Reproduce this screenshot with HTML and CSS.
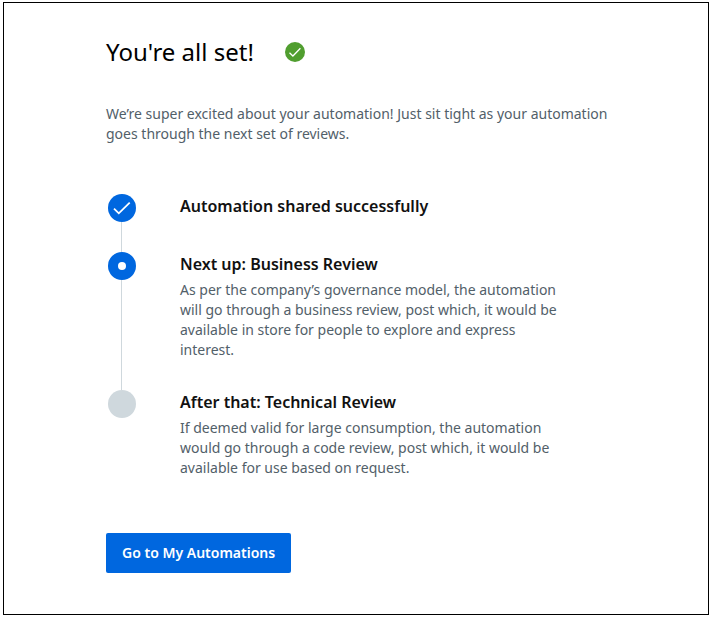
FILE: index.html
```
<!DOCTYPE html>
<html lang="en">
<head>
    <meta charset="utf-8">
    <title>You're all set!</title>
    <link rel="stylesheet" href="styles.css">
</head>
<body>
    <main class="panel">
        <div class="heading">
            <h1>You're all set!</h1>
            <svg class="headingIcon" viewBox="0 0 20 20" aria-hidden="true">
                <circle cx="10" cy="10" r="10" fill="#509e2f"/>
                <path d="M4.5 10.8l3.4 3.2L15.4 6.3" fill="none" stroke="#fff" stroke-width="1.3"/>
            </svg>
        </div>
        <p class="intro">We’re super excited about your automation! Just sit tight as your automation goes through the next set of reviews.</p>

        <ol class="steps">
            <li class="step">
                <svg class="marker" viewBox="0 0 28 28" aria-hidden="true">
                    <circle cx="14" cy="14" r="14" fill="#0067df"/>
                    <path d="M6 14.6l4.8 4.7L21.7 8.7" fill="none" stroke="#fff" stroke-width="1.8"/>
                </svg>
                <div class="stepText">
                    <h2>Automation shared successfully</h2>
                </div>
            </li>
            <li class="step">
                <svg class="marker" viewBox="0 0 28 28" aria-hidden="true">
                    <circle cx="14" cy="14" r="14" fill="#0067df"/>
                    <circle cx="14" cy="14" r="4" fill="#fff"/>
                </svg>
                <div class="stepText">
                    <h2>Next up: Business Review</h2>
                    <p>As per the company’s governance model, the automation will go through a business review, post which, it would be available in store for people to explore and express interest.</p>
                </div>
            </li>
            <li class="step">
                <svg class="marker" viewBox="0 0 28 28" aria-hidden="true">
                    <circle cx="14" cy="14" r="14" fill="#cfd8dd"/>
                </svg>
                <div class="stepText">
                    <h2>After that: Technical Review</h2>
                    <p>If deemed valid for large consumption, the automation would go through a code review, post which, it would be available for use based on request.</p>
                </div>
            </li>
        </ol>

        <button type="button" class="goButton">Go to My Automations</button>
    </main>
</body>
</html>
```

FILE: styles.css
```
* {
    box-sizing: border-box;
}

body {
    margin: 0;
    padding: 2px 3px 3px;
    min-height: 100vh;
    display: flex;
    background-color: #fff;
    font-family: "Noto Sans", sans-serif;
    font-size: 14px;
    line-height: 20px;
    color: #526069;
}

h1, h2, p, ol {
    margin: 0;
    padding: 0;
}

.panel {
    flex: 1;
    border: 1px solid #000;
    padding: 32px 90px 40px 102px;
}

.heading {
    display: flex;
    align-items: center;
    gap: 31px;
}

h1 {
    font-size: 24px;
    font-weight: 400;
    line-height: 34px;
    color: #000;
}

.headingIcon {
    width: 20px;
    height: 20px;
}

.intro {
    margin-top: 35px;
}

.steps {
    list-style: none;
    margin-top: 50px;
    padding-left: 2px;
}

.step {
    display: flex;
    gap: 44px;
    padding-bottom: 30px;
    /* line that joins a marker to the next one */
    background: linear-gradient(#cfd8dd, #cfd8dd) 13px 0 / 1px 100% no-repeat;
}

.step:last-child {
    padding-bottom: 0;
    background: none;
}

.marker {
    flex: none;
    width: 28px;
    height: 28px;
}

.stepText {
    max-width: 384px;
}

h2 {
    font-size: 16px;
    font-weight: 600;
    line-height: 24px;
    color: #111;
}

.stepText p {
    margin-top: 4px;
}

.goButton {
    margin-top: 55px;
    height: 40px;
    padding: 0 16px;
    border: 0;
    border-radius: 2px;
    background-color: #0067df;
    color: #fff;
    font: inherit;
    font-weight: 600;
    cursor: pointer;
}
```
